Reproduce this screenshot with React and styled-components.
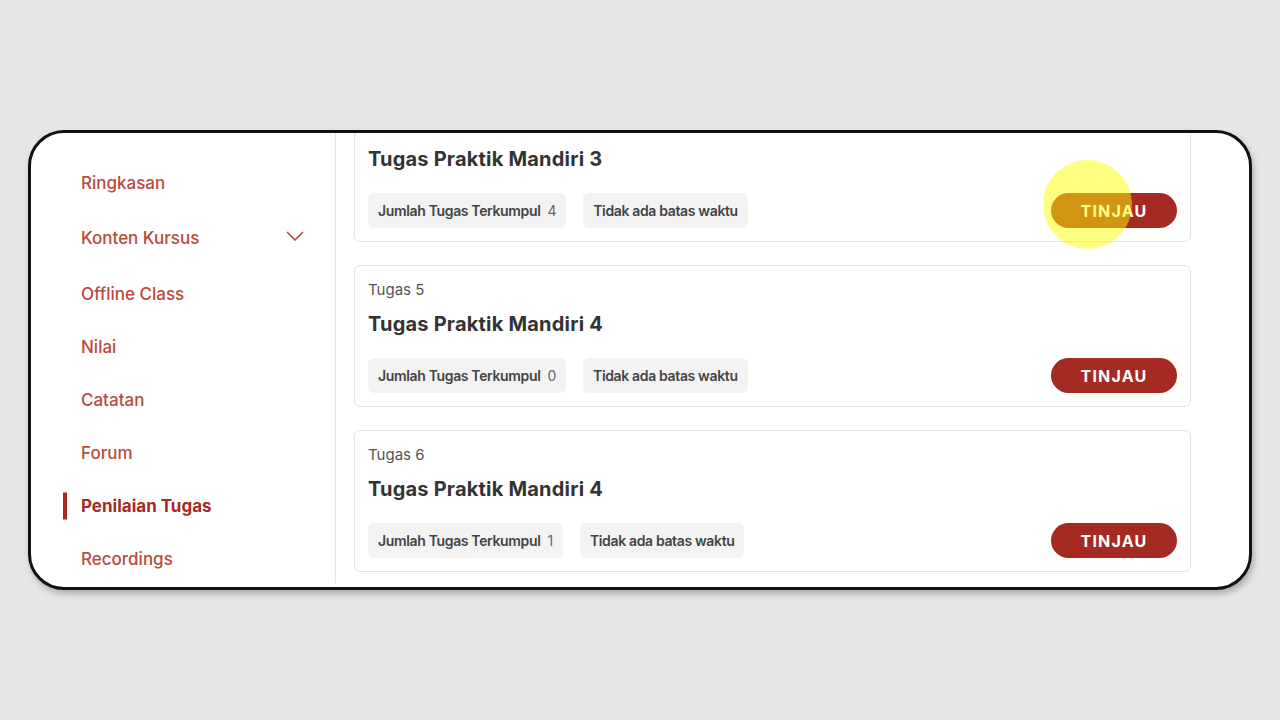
import React from 'react';
import styled, { createGlobalStyle } from 'styled-components';

const GlobalStyle = createGlobalStyle`
  html, body {
    margin: 0;
    padding: 0;
    background: #e6e6e6;
    font-family: Inter, "Noto Sans", sans-serif;
  }
`;

const menu = [
  { label: 'Ringkasan' },
  { label: 'Konten Kursus', dropdown: true },
  { label: 'Offline Class' },
  { label: 'Nilai' },
  { label: 'Catatan' },
  { label: 'Forum' },
  { label: 'Penilaian Tugas', active: true },
  { label: 'Recordings' },
];

// first card is scrolled so its "Tugas 4" label sits above the view
const tasks = [
  { no: 4, title: 'Tugas Praktik Mandiri 3', count: 4, clicked: true, hideLabel: true },
  { no: 5, title: 'Tugas Praktik Mandiri 4', count: 0 },
  { no: 6, title: 'Tugas Praktik Mandiri 4', count: 1 },
];

const App = () => {
  return (
    <Page>
      <GlobalStyle />
      <Frame>
        <Sidebar>
          {menu.map((m) => (
            <MenuItem key={m.label} $active={m.active} $tall={m.dropdown}>
              {m.active && <ActiveBar />}
              <span>{m.label}</span>
              {m.dropdown && (
                <Chevron width="18" height="11" viewBox="0 0 18 11">
                  <polyline points="1.5,1.5 9,9 16.5,1.5" />
                </Chevron>
              )}
            </MenuItem>
          ))}
        </Sidebar>
        <Content>
          <List>
            {tasks.map((t) => (
              <Card key={t.no}>
                {!t.hideLabel && <Label>Tugas {t.no}</Label>}
                <Title $first={t.hideLabel}>{t.title}</Title>
                <BottomRow>
                  <Chips>
                    <Chip>
                      Jumlah Tugas Terkumpul <Count>{t.count}</Count>
                    </Chip>
                    <Chip>Tidak ada batas waktu</Chip>
                  </Chips>
                  <Button>
                    TINJAU
                    {t.clicked && <ClickDot />}
                  </Button>
                </BottomRow>
              </Card>
            ))}
          </List>
        </Content>
      </Frame>
    </Page>
  );
};

const Page = styled.div`
  width: 1280px;
  height: 720px;
  display: flex;
  align-items: center;
  justify-content: center;
`;

const Frame = styled.div`
  width: 1224px;
  height: 460px;
  box-sizing: border-box;
  border: 3px solid #111;
  border-radius: 36px;
  background: #fff;
  box-shadow: 2px 4px 6px rgba(0, 0, 0, 0.25);
  display: flex;
  overflow: hidden;
`;

const Sidebar = styled.nav`
  width: 305px;
  flex-shrink: 0;
  border-right: 1px solid #e6e6e6;
  padding-top: 23px;
  box-sizing: border-box;
  margin-bottom: 4px;
`;

const MenuItem = styled.div`
  position: relative;
  height: ${(p) => (p.$tall ? '58px' : '53px')};
  display: flex;
  align-items: center;
  justify-content: space-between;
  padding: 0 31px 0 50px;
  font-size: 17px;
  font-weight: ${(p) => (p.$active ? 700 : 500)};
  color: ${(p) => (p.$active ? '#a52a22' : '#b94a3d')};
`;

const ActiveBar = styled.div`
  position: absolute;
  left: 32px;
  top: 50%;
  transform: translateY(-50%);
  width: 4px;
  height: 27px;
  background: #a52a22;
`;

const Chevron = styled.svg`
  fill: none;
  stroke: #b94a3d;
  stroke-width: 1.7;
  stroke-linecap: round;
  stroke-linejoin: round;
  margin-top: -3px;
`;

const Content = styled.main`
  flex: 1;
  overflow: hidden;
  padding: 0 58px 0 18px;
`;

const List = styled.div`
  display: flex;
  flex-direction: column;
  gap: 23px;
  margin-top: -3px;
`;

const Card = styled.div`
  border: 1px solid #e2e2e2;
  border-radius: 6px;
  padding: 13px 13px 13px;
  display: flex;
  flex-direction: column;
`;

const Label = styled.div`
  font-size: 15px;
  line-height: 22px;
  color: #555;
`;

const Title = styled.div`
  margin-top: ${(p) => (p.$first ? '1px' : '9px')};
  font-size: 20px;
  line-height: 28px;
  font-weight: 700;
  color: #333;
  letter-spacing: 0.2px;
`;

const BottomRow = styled.div`
  margin-top: 20px;
  display: flex;
  align-items: center;
  justify-content: space-between;
`;

const Chips = styled.div`
  display: flex;
  gap: 17px;
`;

const Chip = styled.div`
  height: 35px;
  display: flex;
  align-items: center;
  gap: 7px;
  padding: 0 10px;
  background: #f3f3f3;
  border-radius: 6px;
  font-size: 14px;
  font-weight: 600;
  color: #444;
  letter-spacing: -0.35px;
`;

const Count = styled.span`
  font-weight: 400;
  color: #666;
`;

const Button = styled.button`
  position: relative;
  width: 126px;
  height: 35px;
  border: none;
  border-radius: 18px;
  background: #a52a22;
  color: #fff;
  font-family: Inter, "Noto Sans", sans-serif;
  font-size: 16px;
  font-weight: 700;
  letter-spacing: 1.2px;
  padding: 0;
`;

const ClickDot = styled.span`
  position: absolute;
  left: -8px;
  top: -33px;
  width: 89px;
  height: 89px;
  border-radius: 50%;
  background: rgba(255, 255, 0, 0.5);
  pointer-events: none;
`;

export default App;
